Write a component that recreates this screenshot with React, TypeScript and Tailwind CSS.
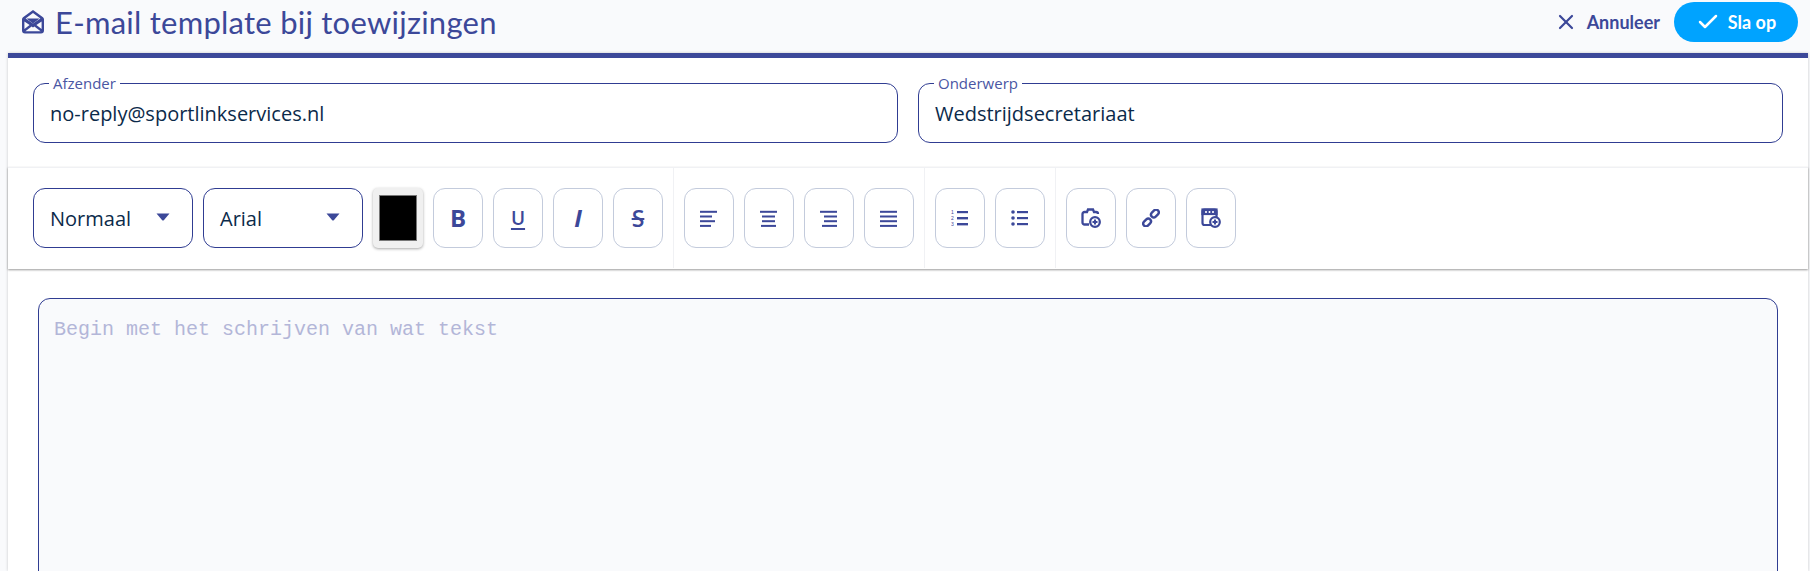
import { ReactNode } from "react";
import { Check, X } from "lucide-react";

const btnClass =
  "flex h-[60px] w-[50px] shrink-0 items-center justify-center rounded-[12px] border border-[#c3cbdc] bg-white text-[#3c4899]";

const ToolButton = ({ children }: { children: ReactNode }) => <button className={btnClass}>{children}</button>;

const Group = ({ children, last }: { children: ReactNode; last?: boolean }) => (
  <div className={`flex h-full items-center gap-[10px] pl-[10px] pr-[10px] ${last ? "" : "border-r border-[#f0f1f4]"}`}>
    {children}
  </div>
);

const Lines = ({ rows }: { rows: [number, number][] }) => (
  <svg width="18" height="18" viewBox="0 0 18 18" fill="currentColor">
    {rows.map(([x, w], i) => (
      <rect key={i} x={x} y={1.8 + i * 4.7} width={w} height="2" />
    ))}
  </svg>
);

const FieldBox = ({ label, value }: { label: string; value: string }) => (
  <fieldset className="h-[68px] -mt-[8px] rounded-[12px] border border-[#303d92] px-[16px]">
    <legend className="-ml-px px-[4px] text-[15px] leading-[16px] text-[#4a56a3] font-['Open_Sans',sans-serif]">
      {label}
    </legend>
    <div className="mt-[9px] text-[20px] leading-[28px] text-[#0b2a4a] font-['Open_Sans',sans-serif]">{value}</div>
  </fieldset>
);

const SelectBox = ({ label }: { label: string }) => (
  <div className="flex h-[60px] w-[160px] shrink-0 items-center justify-between rounded-[12px] border border-[#303d92] pl-[16px] pr-[22px] text-[20px] text-[#0b2a4a] font-['Open_Sans',sans-serif]">
    <span className="pt-[2px]">{label}</span>
    <svg width="14" height="8" viewBox="0 0 14 8" className="-mt-[2px] text-[#3c4899]" fill="currentColor">
      <path d="M0.5 0.5h13L8 7a1.4 1.4 0 0 1-2 0z" />
    </svg>
  </div>
);

const App = () => {
  return (
    <div className="h-[571px] w-[1810px] overflow-hidden bg-[#f9fafc]">
      {/* Titelbalk */}
      <header className="flex h-[53px] items-start justify-between pl-[22px] pr-[12px]">
        <div className="flex items-center gap-[11px] pt-[2px] text-[#3c4899]">
          <svg width="22" height="24" viewBox="0 0 22 24" fill="currentColor" className="mt-[-1px]">
            <path
              fillRule="evenodd"
              d="M11 0 21 7.2A3 3 0 0 1 22 9.5V20.5A3 3 0 0 1 19 23.5H3A3 3 0 0 1 0 20.5V9.5A3 3 0 0 1 1 7.2ZM11 3 3.6 8.4 11 13.6 18.4 8.4ZM2.4 11.4V19L7.6 15ZM19.6 11.4 14.4 15 19.6 19ZM9.6 16.4 3.4 21.2H18.6L12.4 16.4 11 17.4Z"
            />
            <path d="M4.4 8.6h13.2L11 13.4z" />
          </svg>
          <h1 className="text-[31px] leading-[40px] font-normal tracking-[0.25px] font-['Lato',sans-serif]">
            E-mail template bij toewijzingen
          </h1>
        </div>
        <div className="flex items-center pt-[2px]">
          <button className="flex items-center gap-[9px] text-[#3c4899]">
            <X size={24} strokeWidth={2.2} />
            <span className="text-[18px] font-bold font-['Lato',sans-serif]">Annuleer</span>
          </button>
          <button className="ml-[14px] flex h-[40px] w-[124px] items-center justify-center gap-[8px] rounded-full bg-[#00a3ff] text-white">
            <Check size={24} strokeWidth={2.5} />
            <span className="text-[18px] font-bold font-['Lato',sans-serif]">Sla op</span>
          </button>
        </div>
      </header>

      {/* Paneel */}
      <main className="ml-[8px] mr-[2px] h-[518px] border-t-[5px] border-[#3c4899] bg-white shadow-[0_0_3px_rgba(0,0,0,0.2)]">
        <div className="grid h-[109px] grid-cols-2 gap-[20px] px-[25px] pt-[25px]">
          <FieldBox label="Afzender" value="no-reply@sportlinkservices.nl" />
          <FieldBox label="Onderwerp" value="Wedstrijdsecretariaat" />
        </div>

        {/* Werkbalk */}
        <div className="flex h-[102px] items-center border-t border-[#f0f1f4] pb-[1px] pl-[25px] shadow-[0_1px_2px_rgba(0,0,0,0.4)]">
          <div className="flex h-full items-center gap-[10px] border-r border-[#f0f1f4] pr-[10px]">
            <SelectBox label="Normaal" />
            <SelectBox label="Arial" />
            <div className="flex h-[60px] w-[50px] shrink-0 items-center justify-center rounded-[5px] bg-[#f0f0f0] shadow-[0_1px_3px_rgba(0,0,0,0.35)]">
              <div className="h-[46px] w-[38px] border border-[#777] bg-black" />
            </div>
            <ToolButton>
              <span className="text-[24px] font-bold font-['Open_Sans',sans-serif]">B</span>
            </ToolButton>
            <ToolButton>
              <span className="text-[19px] font-semibold underline decoration-2 underline-offset-[3px] font-['Open_Sans',sans-serif]">U</span>
            </ToolButton>
            <ToolButton>
              <span className="text-[24px] font-bold italic font-['Open_Sans',sans-serif]">I</span>
            </ToolButton>
            <ToolButton>
              <span className="text-[23px] font-semibold line-through decoration-2 font-['Open_Sans',sans-serif]">S</span>
            </ToolButton>
          </div>
          <Group>
            <ToolButton><Lines rows={[[0, 17], [0, 12], [0, 15], [0, 11]]} /></ToolButton>
            <ToolButton><Lines rows={[[0, 17], [2, 13], [2, 13], [1, 15]]} /></ToolButton>
            <ToolButton><Lines rows={[[0, 17], [4, 13], [4, 13], [2, 15]]} /></ToolButton>
            <ToolButton><Lines rows={[[0, 17], [0, 17], [0, 17], [0, 17]]} /></ToolButton>
          </Group>
          <Group>
            <ToolButton>
              <svg width="18" height="18" viewBox="0 0 18 18" fill="currentColor">
                <rect x="6" y="2" width="11" height="2.2" />
                <rect x="6" y="8" width="11" height="2.4" />
                <rect x="6" y="14" width="11" height="2.4" />
                <text x="0" y="5" fontSize="5" fontFamily="Liberation Sans, sans-serif">1</text>
                <text x="0" y="11" fontSize="5" fontFamily="Liberation Sans, sans-serif">2</text>
                <text x="0" y="17" fontSize="5" fontFamily="Liberation Sans, sans-serif">3</text>
              </svg>
            </ToolButton>
            <ToolButton>
              <svg width="18" height="18" viewBox="0 0 18 18" fill="currentColor">
                <circle cx="2" cy="3" r="1.8" />
                <circle cx="2" cy="9" r="1.8" />
                <circle cx="2" cy="15" r="1.8" />
                <rect x="6" y="2" width="11" height="2.2" />
                <rect x="6" y="8" width="11" height="2.2" />
                <rect x="6" y="14" width="11" height="2.2" />
              </svg>
            </ToolButton>
          </Group>
          <Group last>
            <ToolButton>
              <svg width="20" height="20" viewBox="0 0 20 20" fill="none" stroke="currentColor" strokeWidth="2.3">
                <path d="M8 16.5H3.5a2 2 0 0 1-2-2V6a2 2 0 0 1 2-2h2.5l1-2.5h5L13 4h2a2 2 0 0 1 2 2" />
                <circle cx="14" cy="14" r="4.8" fill="white" />
                <path d="M14 11.5v5M11.5 14h5" strokeWidth="2" />
              </svg>
            </ToolButton>
            <ToolButton>
              <svg width="18" height="18" viewBox="0 0 18 18" fill="none" stroke="currentColor" strokeWidth="2.4">
                <rect x="8.6" y="1.8" width="8.6" height="5.4" rx="2.7" transform="rotate(-45 12.9 4.5)" />
                <rect x="0.8" y="10.8" width="8.6" height="5.4" rx="2.7" transform="rotate(-45 5.1 13.5)" />
              </svg>
            </ToolButton>
            <ToolButton>
              <svg width="20" height="20" viewBox="0 0 20 20" fill="none" stroke="currentColor" strokeWidth="2.2">
                <rect x="1.5" y="1.5" width="14" height="15.5" rx="2" />
                <rect x="1.5" y="1.5" width="14" height="4.5" fill="currentColor" />
                <path d="M5 3v2M8.5 3v2M12 3v2" stroke="white" strokeWidth="1.6" />
                <circle cx="14" cy="14" r="4.8" fill="white" />
                <path d="M14 11.5v5M11.5 14h5" strokeWidth="2" />
              </svg>
            </ToolButton>
          </Group>
        </div>

        {/* Editor */}
        <div className="mx-[30px] mt-[29px] h-[400px] rounded-t-[12px] border border-[#303d92] bg-[#f9fafc] pt-[17px] pl-[15px] pr-[16px]">
          <p className="text-[20px] leading-[28px] text-[#b3b6d8] font-['Liberation_Mono',monospace]">
            Begin met het schrijven van wat tekst
          </p>
        </div>
      </main>
    </div>
  );
};

export default App;
